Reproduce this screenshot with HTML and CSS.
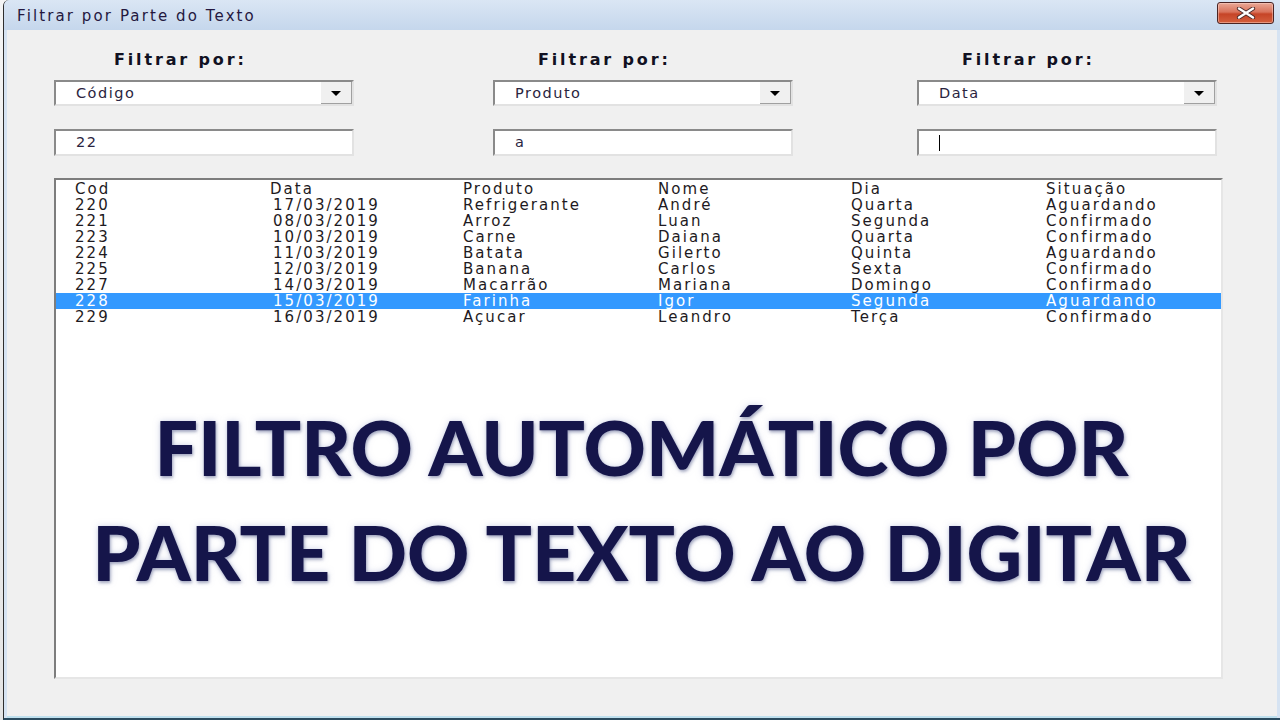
FILE: index.html
```html
<!DOCTYPE html>
<html lang="pt">
<head>
<meta charset="utf-8">
<title>Filtrar por Parte do Texto</title>
<link rel="stylesheet" href="styles.css">
</head>
<body>
<div class="desk">
  <div class="window">
    <div class="titlebar">
      <span class="title">Filtrar por Parte do Texto</span>
      <div class="close">
        <svg width="22" height="12" viewBox="0 0 22 12">
          <path d="M4 1.5 L18 10.5 M18 1.5 L4 10.5" stroke="#4a2a2a" stroke-width="4.2" stroke-linecap="round"/>
          <path d="M4 1.5 L18 10.5 M18 1.5 L4 10.5" stroke="#ffffff" stroke-width="2.4" stroke-linecap="round"/>
        </svg>
      </div>
    </div>
    <div class="client">
      <div class="filters">
        <div class="fcol fcol-1">
          <div class="flabel">Filtrar por:</div>
          <div class="combo"><span class="ctext">Código</span><span class="dropbtn"><span class="tri"></span></span></div>
          <div class="tbox"><span class="ctext">22</span></div>
        </div>
        <div class="fcol fcol-2">
          <div class="flabel">Filtrar por:</div>
          <div class="combo"><span class="ctext">Produto</span><span class="dropbtn"><span class="tri"></span></span></div>
          <div class="tbox"><span class="ctext">a</span></div>
        </div>
        <div class="fcol fcol-3">
          <div class="flabel">Filtrar por:</div>
          <div class="combo"><span class="ctext">Data</span><span class="dropbtn"><span class="tri"></span></span></div>
          <div class="tbox"><span class="caret"></span></div>
        </div>
      </div>
      <div class="listbox">
        <div class="row"><span>Cod</span><span>Data</span><span>Produto</span><span>Nome</span><span>Dia</span><span>Situação</span></div>
        <div class="row"><span>220</span><span class="dt">17/03/2019</span><span>Refrigerante</span><span>André</span><span>Quarta</span><span>Aguardando</span></div>
        <div class="row"><span>221</span><span class="dt">08/03/2019</span><span>Arroz</span><span>Luan</span><span>Segunda</span><span>Confirmado</span></div>
        <div class="row"><span>223</span><span class="dt">10/03/2019</span><span>Carne</span><span>Daiana</span><span>Quarta</span><span>Confirmado</span></div>
        <div class="row"><span>224</span><span class="dt">11/03/2019</span><span>Batata</span><span>Gilerto</span><span>Quinta</span><span>Aguardando</span></div>
        <div class="row"><span>225</span><span class="dt">12/03/2019</span><span>Banana</span><span>Carlos</span><span>Sexta</span><span>Confirmado</span></div>
        <div class="row"><span>227</span><span class="dt">14/03/2019</span><span>Macarrão</span><span>Mariana</span><span>Domingo</span><span>Confirmado</span></div>
        <div class="row selected"><span>228</span><span class="dt">15/03/2019</span><span>Farinha</span><span>Igor</span><span>Segunda</span><span>Aguardando</span></div>
        <div class="row"><span>229</span><span class="dt">16/03/2019</span><span>Açucar</span><span>Leandro</span><span>Terça</span><span>Confirmado</span></div>
        <div class="banner">
          <div class="bline">FILTRO AUTOMÁTICO POR</div>
          <div class="bline">PARTE DO TEXTO AO DIGITAR</div>
        </div>
      </div>
    </div>
  </div>
</div>
</body>
</html>
```

FILE: styles.css
```css
* { box-sizing: border-box; }
html, body { margin: 0; padding: 0; }
body { width: 1280px; height: 720px; overflow: hidden; background: #e9e9e9; font-family: "DejaVu Sans", Verdana, sans-serif; }

.desk { display: flex; height: 720px; padding-left: 3px; background: linear-gradient(#f4f4f4, #e4e4e4); }

.window {
  flex: 1;
  display: flex;
  flex-direction: column;
  border-left: 1px solid #2e2e2e;
  border-top-left-radius: 6px;
  background: #d6e3f2;
  padding: 0 3px 0 3px;
  border-bottom: 2px solid #2b4b5f;
}

.titlebar {
  height: 30px;
  display: flex;
  align-items: center;
  justify-content: space-between;
  margin: 0 -3px;
  padding: 0 6px 0 13px;
  background: linear-gradient(#dae6f4, #c5d7ec);
  border-top-left-radius: 6px;
}
.title {
  font-size: 15px;
  letter-spacing: 2.1px;
  color: #24183f;
  padding-top: 1px;
}
.close {
  width: 57px;
  height: 22px;
  margin-top: -5px;
  border: 1px solid #4a2424;
  border-radius: 3px;
  background: linear-gradient(#eaa896 0%, #d9735c 45%, #c64427 55%, #d4603f 100%);
  display: flex;
  align-items: center;
  justify-content: center;
  box-shadow: inset 0 0 0 1px rgba(255,220,210,.45);
}

.client {
  flex: 1;
  background: #f0f0f0;
  display: flex;
  flex-direction: column;
  padding-left: 47px;
  border-bottom: 2px solid #bfe0ee;
}

.filters {
  display: grid;
  grid-template-columns: 439px 424px 300px;
  padding-top: 20px;
}
.fcol { width: 300px; display: flex; flex-direction: column; }
.flabel {
  height: 20px;
  line-height: 20px;
  font-size: 16px;
  font-weight: bold;
  letter-spacing: 2.85px;
  color: #111122;
  padding-left: 45px;
}
.fcol-1 .flabel { padding-left: 60px; }

.combo, .tbox {
  display: flex;
  align-items: center;
  background: #ffffff;
  border-top: 2px solid #8a8a8a;
  border-left: 2px solid #8a8a8a;
  border-right: 2px solid #e2e2e2;
  border-bottom: 2px solid #e2e2e2;
}
.combo { height: 26px; margin-top: 10px; }
.tbox { height: 27px; margin-top: 23px; }
.ctext {
  flex: 1;
  padding-left: 20px;
  padding-bottom: 1px;
  font-size: 14.5px;
  letter-spacing: 1.5px;
  color: #2a2440;
}
.dropbtn {
  width: 31px;
  height: 22px;
  display: flex;
  align-items: center;
  justify-content: center;
  background: #f0f0f0;
  border-right: 1px solid #a0a0a0;
  border-bottom: 1px solid #a0a0a0;
}
.tri {
  width: 0; height: 0;
  border-left: 5px solid transparent;
  border-right: 5px solid transparent;
  border-top: 5px solid #000;
  margin-top: 2px;
}
.caret {
  width: 1px;
  height: 16px;
  background: #000;
  margin-left: 20px;
}

.listbox {
  position: relative;
  width: 1169px;
  height: 501px;
  margin-top: 22px;
  padding-top: 1px;
  background: #ffffff;
  border-top: 2px solid #7d7d7d;
  border-left: 2px solid #7d7d7d;
  border-right: 2px solid #e6e6e6;
  border-bottom: 2px solid #e6e6e6;
}
.row {
  display: grid;
  grid-template-columns: 195px 193px 195px 193px 195px 1fr;
  padding-left: 19px;
  height: 16px;
  line-height: 16px;
  font-size: 15px;
  letter-spacing: 2.05px;
  color: #1e1a22;
  white-space: nowrap;
}
.row .dt { padding-left: 3px; }
.row.selected { background: #3399ff; color: #ffffff; }

.banner {
  position: absolute;
  left: 0;
  right: 0;
  top: 214px;
  text-align: center;
  font-family: Lato, "Open Sans", sans-serif;
  font-weight: 900;
  font-size: 77px;
  line-height: 105px;
  color: #15154a;
  padding-left: 6px;
  text-shadow: 1px 2px 3px rgba(40, 50, 100, 0.35), 0 0 6px rgba(160, 170, 210, 0.5);
}
```
